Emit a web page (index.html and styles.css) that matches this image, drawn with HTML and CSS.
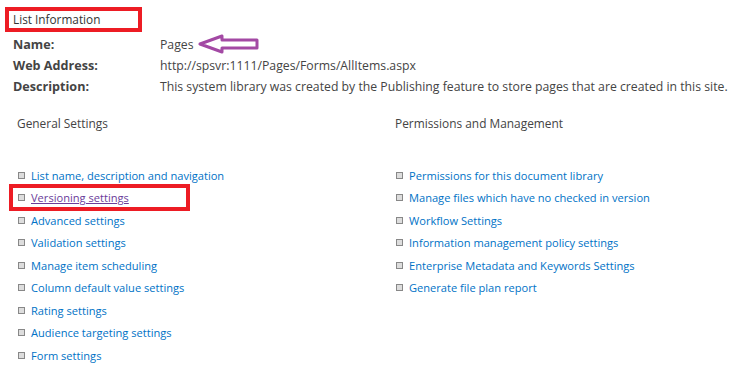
FILE: index.html
```html
<!DOCTYPE html>
<html lang="en">
  <head>
    <meta charset="UTF-8" />
    <title>Document Library Settings</title>
    <link rel="stylesheet" href="styles.css">
  </head>
  <body>
    <div class="list-info">
      <h3 class="marked title">List Information</h3>
      <div class="info-grid">
        <div class="label">Name:</div>
        <div class="value">Pages
          <svg class="arrow" width="64" height="20" viewBox="0 0 64 20">
            <polygon points="3,10 25,2 25,6 60,6 60,14 25,14 25,18" fill="#fff" stroke="#a349a4" stroke-width="3" stroke-linejoin="round" />
          </svg>
        </div>
        <div class="label">Web Address:</div>
        <div class="value">http://spsvr:1111/Pages/Forms/AllItems.aspx</div>
        <div class="label">Description:</div>
        <div class="value">This system library was created by the Publishing feature to store pages that are created in this site.</div>
      </div>
    </div>

    <div class="settings">
      <div class="column">
        <h3 class="section-title">General Settings</h3>
        <ul class="links">
          <li><a href="#">List name, description and navigation</a></li>
          <li class="marked"><a href="#" class="visited">Versioning settings</a></li>
          <li><a href="#">Advanced settings</a></li>
          <li><a href="#">Validation settings</a></li>
          <li><a href="#">Manage item scheduling</a></li>
          <li><a href="#">Column default value settings</a></li>
          <li><a href="#">Rating settings</a></li>
          <li><a href="#">Audience targeting settings</a></li>
          <li><a href="#">Form settings</a></li>
        </ul>
      </div>
      <div class="column">
        <h3 class="section-title">Permissions and Management</h3>
        <ul class="links">
          <li><a href="#">Permissions for this document library</a></li>
          <li><a href="#">Manage files which have no checked in version</a></li>
          <li><a href="#">Workflow Settings</a></li>
          <li><a href="#">Information management policy settings</a></li>
          <li><a href="#">Enterprise Metadata and Keywords Settings</a></li>
          <li><a href="#">Generate file plan report</a></li>
        </ul>
      </div>
    </div>
  </body>
</html>
```

FILE: styles.css
```css
* {
  margin: 0;
  padding: 0;
  box-sizing: border-box;
}
body {
  background-color: white;
  color: #444;
  font-family: "Open Sans", "Noto Sans", sans-serif;
  font-size: 12.25px;
}

/* red annotation boxes */
.marked {
  border: 4px solid #ed1c24;
}

.list-info {
  padding: 7px 0 0 5px;
}
.title {
  font-weight: normal;
  font-size: 11.8px;
  color: #333;
  width: 137px;
  height: 25px;
  line-height: 17px;
  padding-left: 4px;
}

.info-grid {
  display: grid;
  grid-template-columns: 147px auto;
  margin: 2px 0 0 8px;
  line-height: 21px;
}
.label {
  font-weight: bold;
  font-size: 12.6px;
  color: #444;
}
.value {
  display: flex;
  align-items: center;
  gap: 3px;
}
.arrow {
  margin-top: -1px;
}

.settings {
  display: grid;
  grid-template-columns: 378px auto;
  padding-left: 17px;
  margin-top: 16px;
}
.section-title {
  font-weight: normal;
  font-size: 11.9px;
  color: #444;
  line-height: 21px;
  margin-bottom: 30px;
}

.links {
  list-style: none;
  font-size: 11.1px;
}
.links li {
  display: flex;
  align-items: center;
  height: 22.5px;
}
.links li::before {
  content: "";
  width: 5px;
  height: 5px;
  border: 1px solid #888;
  background-color: #ddd;
  margin: 0 6px 0 1px;
}
.links li.marked {
  width: 181px;
  height: 27px;
  margin: -2.25px 0 -2.25px -8px;
  padding-left: 4px;
}
.links a {
  color: #0072c6;
  text-decoration: none;
}
.links a.visited {
  color: #6b3c9a;
  text-decoration: underline;
}
```
